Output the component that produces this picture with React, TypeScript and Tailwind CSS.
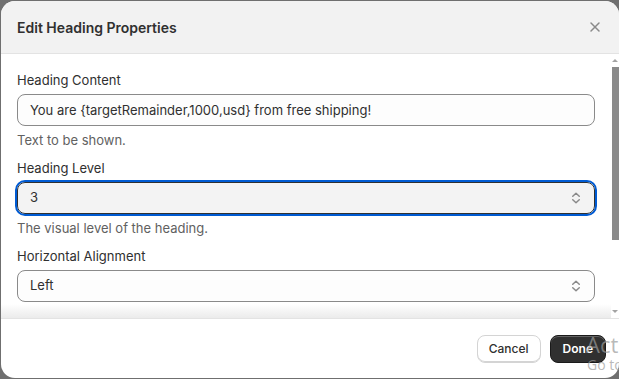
import React from "react";

const font = { fontFamily: "Inter, 'Noto Sans', sans-serif" };

function SelectIcon() {
  return (
    <svg width="20" height="20" viewBox="0 0 20 20" fill="none" stroke="#8a8a8a" strokeWidth="1.5" strokeLinecap="round" strokeLinejoin="round">
      <path d="M6.75 8.25 10 5.25l3.25 3" />
      <path d="M6.75 11.75 10 14.75l3.25-3" />
    </svg>
  );
}

export default function App() {
  return (
    <div className="relative w-[619px] h-[379px] overflow-hidden bg-[#6f6f6f] pt-[1px] pl-[1px]" style={font}>
      <div className="w-[618px] h-[377px] bg-white rounded-[14px] overflow-hidden flex flex-col">
        {/* header */}
        <div className="h-[53px] shrink-0 bg-[#f2f2f2] border-b border-[#e3e3e3] flex items-center justify-between pl-4 pr-[14px]">
          <div className="text-[14px] font-semibold text-[#303030]">Edit Heading Properties</div>
          <svg width="20" height="20" viewBox="0 0 20 20" fill="none" stroke="#8a8a8a" strokeWidth="1.5" strokeLinecap="round">
            <path d="M6 6l8 8M14 6l-8 8" />
          </svg>
        </div>
        {/* body */}
        <div className="flex-1 flex min-h-0">
          <div className="relative flex-1 pl-4 pr-[16px] pt-[16px] text-[13px] text-[#303030] overflow-hidden">
            <div className="leading-5">Heading Content</div>
            <div className="mt-1 h-[32px] rounded-[8px] border border-[#8a8a8a] bg-[#fdfdfd] flex items-center pl-3 leading-5">
              You are {"{targetRemainder,1000,usd}"} from free shipping!
            </div>
            <div className="mt-1 leading-5 text-[#616161]">Text to be shown.</div>

            <div className="mt-2 leading-5">Heading Level</div>
            <div className="mt-1 h-[32px] rounded-[8px] border border-[#303030] bg-[#f3f3f3] outline-2 outline-[#005bd3] outline-offset-0 flex items-center justify-between pl-3 pr-2">
              <span>3</span>
              <SelectIcon />
            </div>
            <div className="mt-1 leading-5 text-[#616161]">The visual level of the heading.</div>

            <div className="mt-2 leading-5">Horizontal Alignment</div>
            <div className="mt-1 h-[32px] rounded-[8px] border border-[#8a8a8a] bg-[#fdfdfd] flex items-center justify-between pl-3 pr-2">
              <span>Left</span>
              <SelectIcon />
            </div>
            <div className="absolute left-0 right-0 bottom-0 h-[14px] bg-gradient-to-b from-white/0 to-[#ebebeb]" />
          </div>
          {/* scrollbar */}
          <div className="w-[8px] shrink-0 bg-white flex flex-col items-center">
            <svg width="8" height="6" viewBox="0 0 8 6" className="mt-[3px]">
              <path d="M1 5h6L4 2z" fill="#a3a3a3" />
            </svg>
            <div className="mt-[4px] w-[7px] h-[173px] bg-[#8a8a8a]" />
            <div className="flex-1" />
            <svg width="8" height="6" viewBox="0 0 8 6" className="mb-[3px]">
              <path d="M1 1h6L4 4z" fill="#a3a3a3" />
            </svg>
          </div>
        </div>
        {/* footer */}
        <div className="h-[60px] shrink-0 border-t border-[#e3e3e3] flex items-center justify-end gap-[9px] pr-[13px]">
          <button className="h-[28px] px-[11px] rounded-[8px] border border-[#d4d4d4] bg-white text-[12px] font-medium text-[#303030] shadow-[inset_0_-1px_0_#d4d4d4]">
            Cancel
          </button>
          <button className="h-[28px] px-3 rounded-[8px] bg-[#303030] border border-[#1a1a1a] text-[12px] font-semibold text-white shadow-[inset_0_1px_0_rgba(255,255,255,0.25)]">
            Done
          </button>
        </div>
      </div>
      {/* windows watermark */}
      <div className="absolute left-[586px] top-[331px] text-[22px] leading-[26px] text-[#9a9a9a]/70 whitespace-nowrap" style={{ fontFamily: "'Open Sans', sans-serif" }}>
        Activate Windows
      </div>
      <div className="absolute left-[587px] top-[356px] text-[14px] leading-[18px] text-[#9a9a9a]/70 whitespace-nowrap" style={{ fontFamily: "'Open Sans', sans-serif" }}>
        Go to Settings to activate Windows.
      </div>
    </div>
  );
}
